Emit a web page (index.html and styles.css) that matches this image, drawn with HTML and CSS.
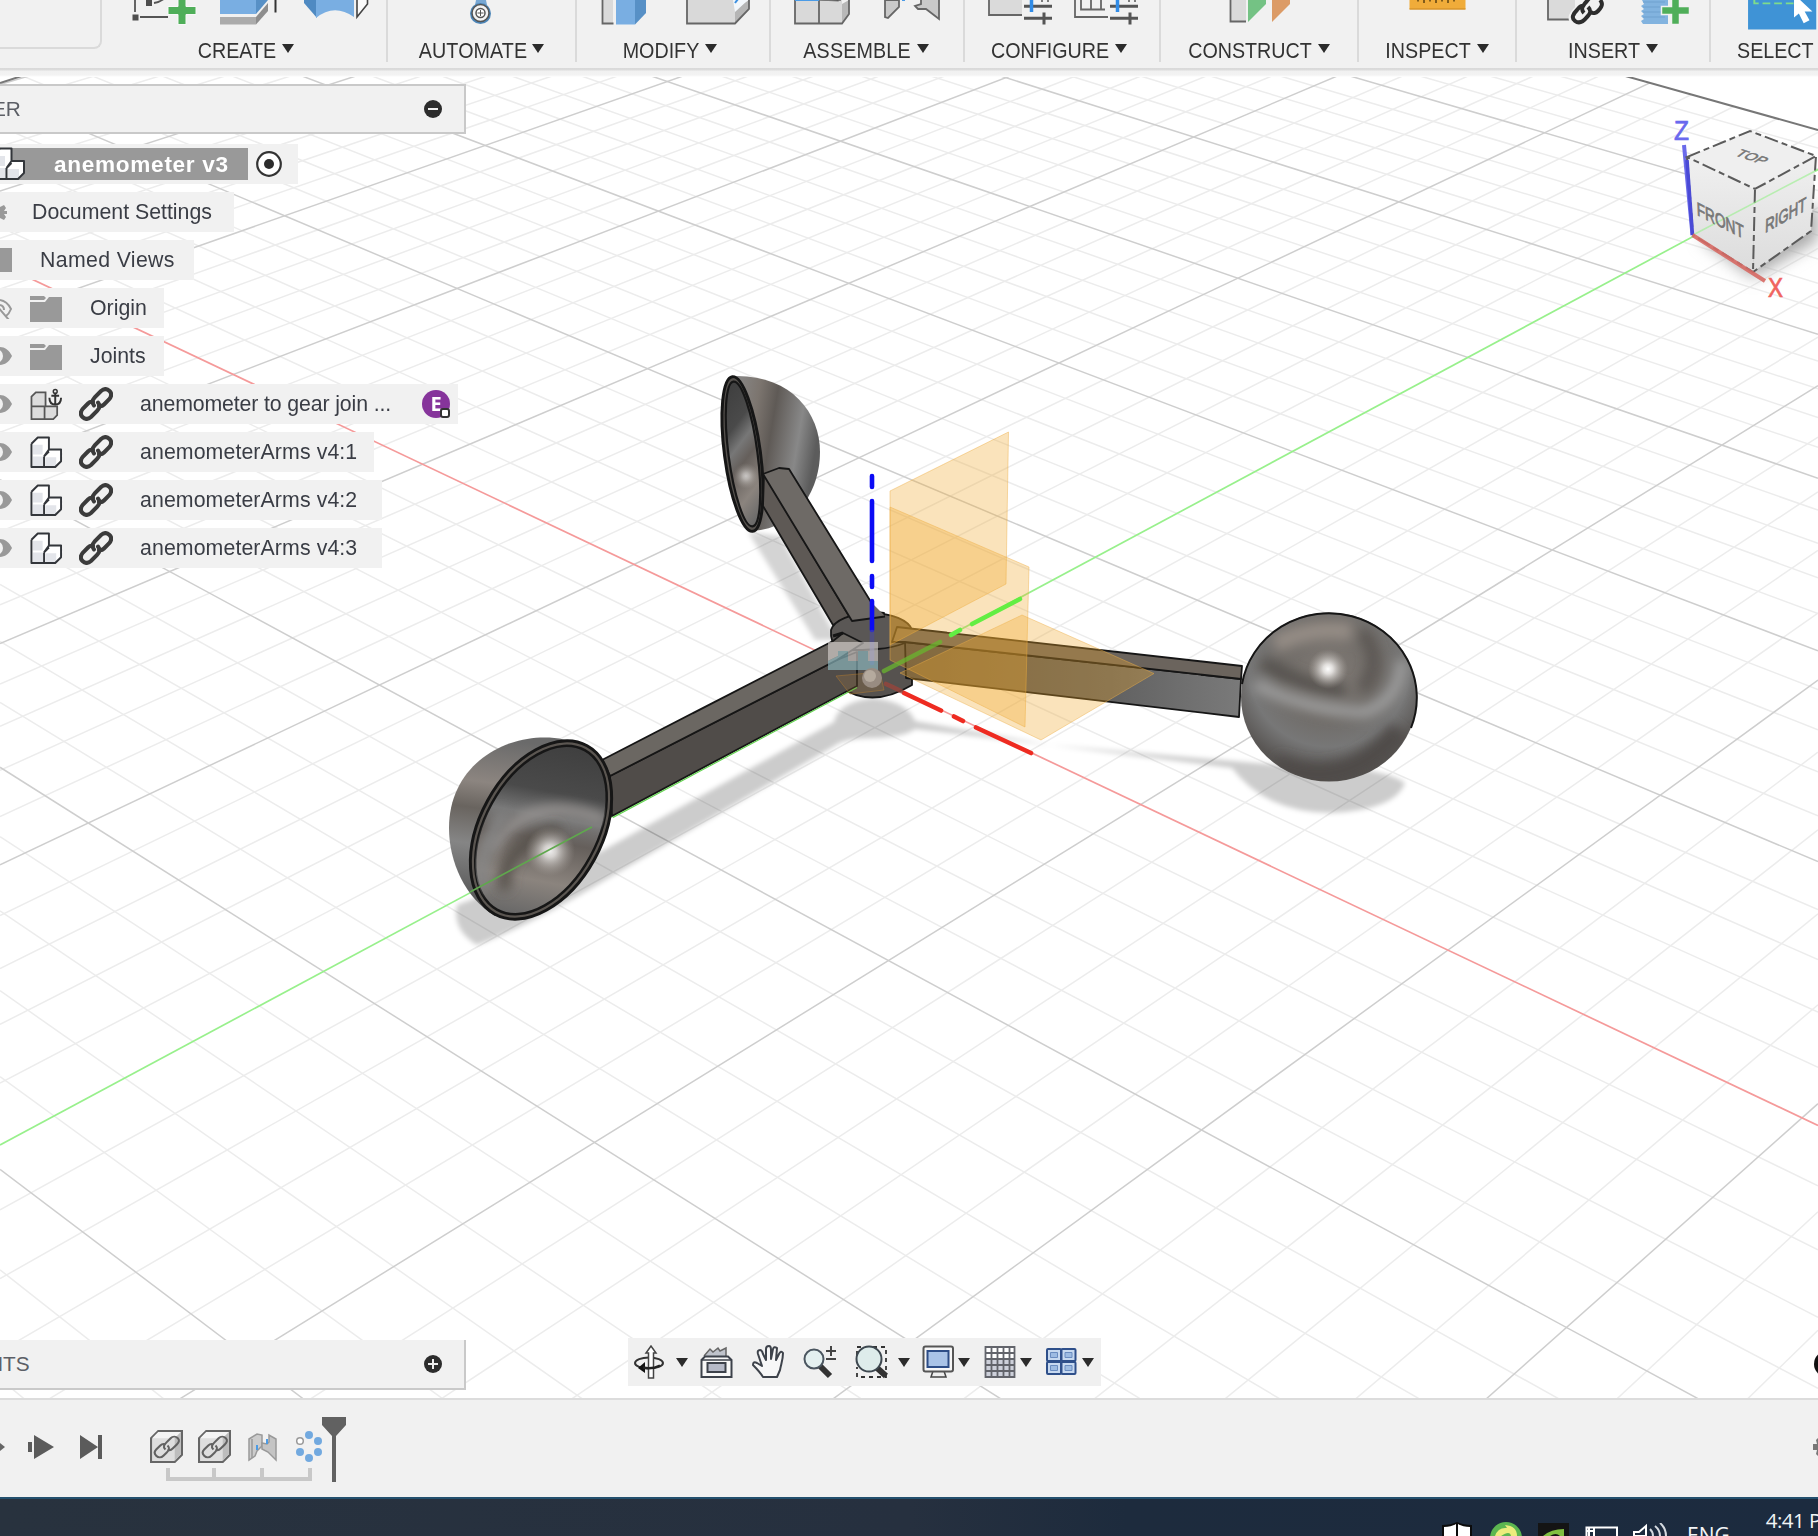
FILE: index.html
```html
<!DOCTYPE html>
<html lang="en">
<head>
<meta charset="utf-8">
<title>anemometer v3</title>
<link rel="stylesheet" href="styles.css">
</head>
<body>
<svg class="defs" width="0" height="0" aria-hidden="true">
  <defs>
    <symbol id="caret" viewBox="0 0 12 9"><path d="M0 0h12l-6 9z" fill="#2b2b2b"/></symbol>
    <symbol id="eye" viewBox="0 0 14 22"><path d="M-14 11C-6-1 6-1 12 11C6 23-6 23-14 11Z" fill="#999"/><circle cx="-4" cy="11" r="7" fill="#f1f1f1"/><circle cx="-4" cy="11" r="4" fill="#999"/></symbol>
    <symbol id="folder" viewBox="0 0 32 27"><path d="M0 1h14l2 2-2 2H0zM0 7h15l4-5h13v25H0z" fill="#999"/></symbol>
    <symbol id="comp" viewBox="0 0 34 34"><path d="M2 7 7 2h13v13h8l5 0v11l-6 6H2z" fill="#fff"/><path d="M3 21h11v10H3zM16 22h11v9H16zM3 9h10v10H3z" fill="#e3e5ea"/><path d="M1.500 8 8 1.500H19.500V14l-5 7M19.500 14H32v12l-6 6H1.500V8M14.500 21V32M14.500 21l5-5" fill="none" stroke="#33363b" stroke-width="2" stroke-linejoin="round"/></symbol>
    <symbol id="link" viewBox="0 0 34 34"><g fill="none" stroke="#3b3b3b" stroke-width="4" stroke-linecap="round"><path d="M15 18.500c-3-4-1-6 1-8.500l6-6c3-2.500 6-2.500 8.500 0s2 5.500-.5 8.500l-5 5c-2 2-3 2-5 1.500"/><path d="M19 15.500c3 4 1 6-1 8.500l-6 6c-3 2.500-6 2.500-8.500 0s-2-5.500.5-8.500l5-5c2-2 3-2 5-1.500"/></g></symbol>
    <symbol id="linkblock" viewBox="0 0 32 32"><path d="M1 8 8 1H31V24L24 31H1Z" fill="#dedede" stroke="#666" stroke-width="2"/><path d="M8 2h22l-6 6H2z" fill="#f4f4f4"/><path d="M24 8l6-6v21l-6 7z" fill="#bdbdbd"/><g fill="none" stroke="#626262" stroke-width="2"><path d="M15 19c-3-3-1-5 1-7l4-4c2-2 5-2 7 0s1 4-1 6l-4 4c-2 2-3 2-5 1"/><path d="M17 15c3 3 1 5-1 7l-3 3c-2 2-5 2-7 0s-2-4 0-6l4-4c2-2 3-2 5-1"/></g></symbol>
    <radialGradient id="ball" cx=".5" cy=".34" r=".7"><stop offset="0" stop-color="#807a75"/><stop offset=".4" stop-color="#6f6b67"/><stop offset=".65" stop-color="#777"/><stop offset=".85" stop-color="#5a5755"/><stop offset="1" stop-color="#4f4c49"/></radialGradient>
    <linearGradient id="bowl" x1=".4" y1="0" x2=".6" y2="1"><stop offset="0" stop-color="#3f3f3f"/><stop offset=".28" stop-color="#4a4a4a"/><stop offset=".42" stop-color="#777"/><stop offset=".55" stop-color="#655f5b"/><stop offset=".78" stop-color="#8b847e"/><stop offset="1" stop-color="#666"/></linearGradient>
    <linearGradient id="shell" x1="0" y1="0" x2="1" y2=".3"><stop offset="0" stop-color="#8a8a8a"/><stop offset=".3" stop-color="#7c756f"/><stop offset=".5" stop-color="#5f5a56"/><stop offset=".8" stop-color="#888"/><stop offset="1" stop-color="#5c5c5c"/></linearGradient>
    <linearGradient id="shell2" x1=".3" y1="0" x2=".2" y2="1"><stop offset="0" stop-color="#6a6a6a"/><stop offset=".25" stop-color="#8c8580"/><stop offset=".4" stop-color="#69645f"/><stop offset=".6" stop-color="#858585"/><stop offset="1" stop-color="#4b4b4b"/></linearGradient>
    <linearGradient id="arm" x1="0" x2="1"><stop offset="0" stop-color="#4f4b48"/><stop offset=".6" stop-color="#606060"/><stop offset="1" stop-color="#7a7a7a"/></linearGradient>
    <radialGradient id="glow"><stop offset="0" stop-color="#fff"/><stop offset=".25" stop-color="#f2f0ee" stop-opacity=".85"/><stop offset="1" stop-color="#aaa49e" stop-opacity="0"/></radialGradient>
    <linearGradient id="face" x1="0" y1="0" x2="0" y2="1"><stop offset="0" stop-color="#f0f0f0"/><stop offset="1" stop-color="#dcdcdc"/></linearGradient>
    <filter id="soft" x="-30%" y="-30%" width="160%" height="160%"><feGaussianBlur stdDeviation="2.500"/></filter>
    <filter id="sheen" x="-30%" y="-60%" width="160%" height="220%"><feGaussianBlur stdDeviation="6"/></filter>
    <filter id="haze" x="-50%" y="-50%" width="200%" height="200%"><feGaussianBlur stdDeviation="8"/></filter>
    <clipPath id="gridclip"><path d="M0 77H1627L1818 129.500V1398H0Z"/></clipPath>
    <clipPath id="ballclip"><ellipse cx="1329" cy="697" rx="87" ry="84"/></clipPath>
    <clipPath id="bowlclip"><ellipse cx="541" cy="830" rx="56" ry="91" transform="rotate(28.700 541 830)"/></clipPath>
  </defs>
</svg>

<header class="toolbar">
  <div class="workspace"></div>
  <section class="group create">
    <svg class="strip" viewBox="102 0 286 30" width="286" height="30">
      <path d="M135 0V12M140 17H168M154 3Q161 2 166-3" stroke="#555" stroke-width="1.800" fill="none"/><path d="M132.500 14.500h6v6h-6zM146 0h6v6h-6z" fill="#4e4e4e"/>
      <path d="M178-4h8V6.500h10v8H186V24.500h-8v-10h-10v-8h10z" fill="#4fae59" stroke="#f8f8f8" stroke-width="1"/>
      <path d="M220 0h36v14h-36z" fill="#79aee2"/><path d="M256 14V0h12z" fill="#5790c6"/><path d="M220 17h36v7.500h-36z" fill="#ababab"/><path d="M256 17 268 3v8L256 24.500z" fill="#8d8d8d"/><path d="M275.500 0V12.500" stroke="#333" stroke-width="2"/>
      <path d="M304 0h13v18L304 3z" fill="#4f8ac2"/><path d="M316 0h38v17Q334 3 316 18z" fill="#79aee2"/><path d="M357 0V17L367.500 4V0" fill="#fafafa" stroke="#444" stroke-width="1.600"/>
    </svg>
    <div class="label"><span>CREATE</span><svg class="caret"><use href="#caret"/></svg></div>
  </section>
  <section class="group automate">
    <svg class="strip" viewBox="388 0 189 30" width="189" height="30"><path d="M476 0h10l1 5h-12z" fill="#78a8d4"/><circle cx="480.500" cy="13.500" r="10.500" fill="#4d86b8"/><circle cx="480.500" cy="13" r="8.500" fill="#f3f3f3" stroke="#555" stroke-width="1.500"/><circle cx="480.500" cy="13" r="4.500" fill="#fff" stroke="#555" stroke-width="1.500"/><path d="M480.500 10v6M477.500 13h6" stroke="#555"/></svg>
    <div class="label"><span>AUTOMATE</span><svg class="caret"><use href="#caret"/></svg></div>
  </section>
  <section class="group modify">
    <svg class="strip" viewBox="577 0 194 30" width="194" height="30"><path d="M613 0V23.500H602.500V0" fill="#dadada" stroke="none"/><path d="M602.500 0V23.500H613.500" fill="none" stroke="#666" stroke-width="1.800"/><path d="M616 0h19v24.500h-19z" fill="#79aee2"/><path d="M635 0h11v13L635 24.500z" fill="#5790c6"/><path d="M687 0V23.500H735V0z" fill="#d9d9d9"/><path d="M735 23.500 749 9V0L735 9z" fill="#b5b5b5"/><path d="M733 0h15L735 12z" fill="#f3f7fb"/><path d="M687 0V23.500H735L749 9V0" fill="none" stroke="#666" stroke-width="1.800"/><path d="M735 3l3-4" stroke="#3b8fe0" stroke-width="2"/></svg>
    <div class="label"><span>MODIFY</span><svg class="caret"><use href="#caret"/></svg></div>
  </section>
  <section class="group assemble">
    <svg class="strip" viewBox="771 0 194 30" width="194" height="30"><path d="M795 0V23.500H842V0z" fill="#d9d9d9"/><path d="M842 23.500 849 14V0l-7 4z" fill="#b8b8b8"/><path d="M795 0V23.500H842L849 14V0M819 0V23.500" fill="none" stroke="#666" stroke-width="1.800"/><path d="M795 0h24" stroke="#4b9be6" stroke-width="2"/><path d="M819 0h22l-3 1z" stroke="#777"/><path d="M885 0V17l3 1L899 7V0z" fill="#c9c9c9" stroke="#666" stroke-width="1.800"/><path d="M921 0V4l-6 2 3 3 8 0 13 10V0" fill="#c9c9c9" stroke="#666" stroke-width="1.800"/><path d="M902 0h3" stroke="#4b9be6" stroke-width="2"/></svg>
    <div class="label"><span>ASSEMBLE</span><svg class="caret"><use href="#caret"/></svg></div>
  </section>
  <section class="group configure">
    <svg class="strip" viewBox="965 0 196 30" width="196" height="30"><path d="M989 0V15h33V0z" fill="#dadada"/><path d="M989 0V15H1022" fill="none" stroke="#666" stroke-width="1.800"/><path d="M1024 6.300h28M1024 18.300h28M1044 12.500v12" stroke="#555" stroke-width="3"/><path d="M1031.500 0v12" stroke="#318ce7" stroke-width="3.500"/><path d="M1042 0v2M1048 0v2" stroke="#555" stroke-width="1.500"/><path d="M1075 0V17H1108M1081 0V9.500H1105M1091 0v9M1101 0v9" fill="none" stroke="#666" stroke-width="1.800"/><path d="M1110 6.300h28M1110 18.300h28M1130 12.500v12" stroke="#555" stroke-width="3"/><path d="M1117.500 0v12" stroke="#318ce7" stroke-width="3.500"/><path d="M1129 0v2M1135 0v2" stroke="#555" stroke-width="1.500"/></svg>
    <div class="label"><span>CONFIGURE</span><svg class="caret"><use href="#caret"/></svg></div>
  </section>
  <section class="group construct">
    <svg class="strip" viewBox="1161 0 198 30" width="198" height="30"><path d="M1230.500 0V21.500H1246V0z" fill="#dadada"/><path d="M1230.500 0V21.500H1246" fill="none" stroke="#666" stroke-width="1.800"/><path d="M1248 0h18V4L1248 22z" fill="#74c284"/><path d="M1272 0h18V4l-18 18z" fill="#dc9b66"/></svg>
    <div class="label"><span>CONSTRUCT</span><svg class="caret"><use href="#caret"/></svg></div>
  </section>
  <section class="group inspect">
    <svg class="strip" viewBox="1359 0 158 30" width="158" height="30"><path d="M1409.500 0h56v9h-56z" fill="#f0ac3a"/><path d="M1409.500 9h56" stroke="#d9952a" stroke-width="1.500"/><path d="M1418 0v1.500M1424 0v3M1430 0v1.500M1436 0v3M1442 0v1.500M1448 0v3M1454 0v1.500" stroke="#5c4212" stroke-width="1.500"/></svg>
    <div class="label"><span>INSPECT</span><svg class="caret"><use href="#caret"/></svg></div>
  </section>
  <section class="group insert">
    <svg class="strip" viewBox="1517 0 194 30" width="194" height="30"><path d="M1548 0V19.500H1575V0z" fill="#dadada"/><path d="M1548 0V19.500H1572" fill="none" stroke="#666" stroke-width="1.800"/><g fill="none" stroke="#f1f1f1" stroke-width="7"><path d="M1584 12c-3-4 0-7 4-11l6-6M1588 9c3 4 1 6-2 9-4 5-8 6-12 3s-1-7 3-11"/></g><g fill="none" stroke="#2d2d2d" stroke-width="4"><path d="M1584 13c-4-4-1-8 3-12l4-5M1588 7c4 4 2 7-1 10-4 5-8 7-12 4s-2-7 2-11c2-3 5-5 8-4M1600 0c4 4 1 8-2 11-2 2-5 3-7 1"/></g><path d="M1642 0h26v24l-3 0h-22l-2-3 3-2-3-3 3-2-3-3 3-2-3-3 3-2z" fill="#82b3df"/><path d="M1643 2h22M1643 7h22M1643 12h22M1643 17h22" stroke="#6fa1cf"/><path d="M1671.500-4h8V6.500h10v8h-10V24.500h-8v-10h-10v-8h10z" fill="#4fae59" stroke="#f1f1f1" stroke-width="1.500"/></svg>
    <div class="label"><span>INSERT</span><svg class="caret"><use href="#caret"/></svg></div>
  </section>
  <section class="group select">
    <svg class="strip" viewBox="1711 0 107 31" width="107" height="31"><path d="M1747.500 0H1818V30.500h-70.500z" fill="#3f93d6"/><path d="M1754 0v3.500h41" stroke="#7edc8b" stroke-width="2" stroke-dasharray="8 4" fill="none"/><path d="M1795-6V18l5-4 5 10 6-3-5-9h8z" fill="#fff"/></svg>
    <div class="label"><span>SELECT</span></div>
  </section>
</header>

<main class="canvas">
  <svg class="scene" viewBox="0 77 1818 1321" width="1818" height="1321">
    <g clip-path="url(#gridclip)"><g id="minor"></g><g id="major"></g></g>
    <path d="M1620 74.500 1818 130" stroke="#777" stroke-width="2"/>
    <path d="M0 83 28 74" stroke="#777" stroke-width="2"/>
    <path d="M0 264 1818 1125.500" stroke="#f59a9a" stroke-width="1.700"/>
    <path d="M0 1145 1818 169.500" stroke="#98f08c" stroke-width="1.700"/>

    <!-- ground shadows -->
    <g fill="#000" fill-opacity=".2" filter="url(#soft)">
      <path d="M748 532 780 536 838 640 815 640Z" opacity=".85"/>
      <path d="M457 905Q452 930 477 945Q530 925 595 886L836 745Q845 738 873 738Q905 737 915 729L1050 745 1232 768Q1265 812 1330 813Q1395 810 1405 783Q1380 765 1290 766L1050 745 915 721Q908 702 873 698Q838 702 834 722L600 852Z"/>
    </g>

    <g stroke="#161616" stroke-width="1.800" stroke-linejoin="round">
      <!-- rear cup -->
      <path d="M733 376C790 374 820 412 820 452C820 487 800 528 752 531Z" fill="url(#shell)" stroke="none"/>
      <ellipse cx="742.500" cy="454" rx="18" ry="78" transform="rotate(-7.500 742.500 454)" fill="#56524e" stroke-width="3"/>
      <ellipse cx="743" cy="454" rx="14.500" ry="73" transform="rotate(-7.500 743 454)" fill="url(#bowl)" stroke-width="2.200"/>
      <circle cx="746" cy="476" r="13" fill="url(#glow)" stroke="none" opacity=".6"/>
      <path d="M764 474 852 621 833 625 763 506Z" fill="#5e5955"/>
      <!-- hub -->
      <path d="M840 650V687Q872 709 912 685V630Z" fill="#56524f"/>
      <path d="M831 630A41 20 0 0 1 912 630Q912 640 905 643Q892 648 878 649L863 650H838Q830 642 831 630Z" fill="#5a5755"/>
      <path d="M876 612 884 613 884 617" fill="#222"/>
      <path d="M763 474 779 468 789 469 871 602 885 616 852 621Z" fill="#6e6a66" stroke="none"/>
      <path d="M885 616.500 852 621 763 474 779 468 789 469 871 602" fill="none"/>
      <!-- right arm -->
      <path d="M905 642 1241 679 1239 717 906 678Z" fill="url(#arm)"/>
      <path d="M897 627 1242 666 1241 679 905 642 892 642Z" fill="#6b645d"/>
      <!-- left arm -->
      <path d="M610 776 837 660 857 652 857 686 612 816Z" fill="#504c49"/>
      <path d="M602 760 833 641 843 633 863 643 837 660 610 776Z" fill="#6b6762"/>
      <path d="M833 636 843 633" fill="none" stroke-width="3"/>
      <!-- front cup -->
      <path d="M582 745C530 722 449 752 449 828C449 862 465 898 495 916L560 840Z" fill="url(#shell2)" stroke="none"/>
      <ellipse cx="541" cy="830" rx="61" ry="96" transform="rotate(28.700 541 830)" fill="#5b5651" stroke-width="3"/>
      <ellipse cx="541" cy="830" rx="56" ry="91" transform="rotate(28.700 541 830)" fill="url(#bowl)" stroke-width="2.500"/>
    </g>
    <g clip-path="url(#bowlclip)">
      <path d="M490 850Q530 790 605 820" stroke="#969391" stroke-width="11" fill="none" filter="url(#sheen)"/>
      <path d="M505 890Q500 845 560 830" stroke="#57514c" stroke-width="12" fill="none" filter="url(#sheen)"/>
      <path d="M482 890Q478 850 505 812" stroke="#858585" stroke-width="12" fill="none" filter="url(#sheen)"/>
      <circle cx="550" cy="851" r="25" fill="url(#glow)" opacity=".9"/>
    </g>
    <path d="M470 892 592 827" stroke="#5fa84d" stroke-width="1.600"/>
    <path d="M613 817.500 857 687.500" stroke="#61d24d" stroke-width="1.200"/>

    <!-- right ball -->
    <ellipse cx="1329" cy="697" rx="88" ry="84.500" fill="url(#ball)" stroke="none"/>
    <g clip-path="url(#ballclip)"><g fill="none" filter="url(#sheen)">
      <path d="M1275 645Q1310 625 1352 632" stroke="#948c85" stroke-width="18"/>
      <path d="M1262 662Q1310 690 1345 690" stroke="#57534f" stroke-width="14"/>
      <path d="M1255 684Q1310 712 1365 712Q1400 700 1402 660" stroke="#9c9c9c" stroke-width="12"/>
      <path d="M1362 632Q1385 660 1362 690" stroke="#5c5753" stroke-width="12"/>
      <path d="M1275 765Q1345 795 1400 730" stroke="#504c48" stroke-width="22"/>
    </g></g>
    <circle cx="1328" cy="669" r="20" fill="url(#glow)"/>
    <path d="M1242 684A88 84.500 0 1 1 1411 728" fill="none" stroke="#151515" stroke-width="2"/>

    <!-- origin planes -->
    <g fill="#f0a72c" fill-opacity=".32" stroke="#eeb04a" stroke-opacity=".45">
      <path d="M890 491 1008.500 432 1006 584 890 645Z"/>
      <path d="M890 507 1029 567 1025 727 890 660Z"/>
      <path d="M1022 615 1154 673.500 1041 740 900 673Z"/>
    </g>
    <g stroke-linecap="round" stroke-width="4.600">
      <path d="M872 476V487M872 501V561M872 576V587M872 601V630" stroke="#0b0bf5"/>
      <path d="M872 632V663" stroke="#4c4c9c" opacity=".6"/>
      <path d="M1020 599 972 624M960 630 951 635" stroke="#62ee43"/>
      <path d="M940 642 884 671" stroke="#69b52e" opacity=".75"/>
      <path d="M904 693 941 710.500M954 716.500 963 721M976 727.500 1031 753" stroke="#ee2b21"/>
      <path d="M886 684 901 691" stroke="#98453c" opacity=".8"/>
    </g>
    <path d="M836 676 880 672 884 690 850 694Z" fill="#b08040" fill-opacity=".22" stroke="#b07a30" stroke-opacity=".5"/>
    <path d="M828 642H878V661H868V651H858V661H848V651H838V656L828 661Z" fill="#ddd8d6" opacity=".6"/>
    <path d="M828 661 838 656V651H848V661H858V651H868V661H878V670H828Z" fill="#93c1c9" opacity=".62"/>
    <circle cx="872" cy="678" r="10" fill="#988c82"/><circle cx="870" cy="676" r="6" fill="#b5aa9e"/>

    <!-- view cube -->
    <path d="M1700 238 1753 278 1818 240V205Z" fill="#aaa" filter="url(#haze)"/>
    <path d="M1684 145 1692.500 235" stroke="#6a6aea" stroke-width="4"/>
    <path d="M1687 157 1750 131 1816 156 1755 189Z" fill="#efefef"/>
    <path d="M1687 157 1755 189 1753 272 1693 235Z" fill="url(#face)"/>
    <path d="M1755 189 1816 156 1811 231 1753 272Z" fill="url(#face)"/>
    <path d="M1687 157 1750 131 1816 156 1755 189ZL1693 235 1753 272 1811 231 1816 156M1755 189 1753 272" fill="none" stroke="#5b5b5b" stroke-width="2" stroke-dasharray="14 4 6 4"/>
    <path d="M1692 235.500 1818 169.500" stroke="#98f08c" stroke-width="1.600" opacity=".6"/>
    <path d="M1687 160 1692.500 235" stroke="#4a4ad6" stroke-width="3.500"/>
    <path d="M1692.500 235 1765 281" stroke="#d76a64" stroke-width="4" opacity=".9"/>
    <g class="cube-text">
      <text transform="matrix(.84 .43 .04 1 1697 215)" textLength="56" lengthAdjust="spacingAndGlyphs">FRONT</text>
      <text transform="matrix(.82 -.46 -.03 1 1765 233)" textLength="50" lengthAdjust="spacingAndGlyphs">RIGHT</text>
      <text transform="matrix(.88 .3 -.6 .45 1734 155)" textLength="32" lengthAdjust="spacingAndGlyphs">TOP</text>
    </g>
    <text class="axis" x="1674" y="140" fill="#6969ee" stroke="#6969ee" textLength="15" lengthAdjust="spacingAndGlyphs">Z</text>
    <text class="axis" x="1768" y="297" fill="#f0645e" stroke="#f0645e" textLength="15" lengthAdjust="spacingAndGlyphs">X</text>
    <circle cx="1827" cy="1364" r="13" fill="#111"/>
  </svg>

  <aside class="browser">
    <div class="panel-head"><span>ER</span><svg class="knob" width="18" height="18"><circle cx="9" cy="9" r="9" fill="#2c2c2c"/><path d="M4 9h10" stroke="#eee" stroke-width="2"/></svg></div>
    <ul class="tree">
      <li class="root"><div class="active"><svg class="cropcomp" viewBox="8 0 26 34" width="26" height="34"><use href="#comp" width="34" height="34"/></svg><b>anemometer v3</b></div><svg width="26" height="26"><circle cx="13" cy="13" r="11.800" fill="#fff" stroke="#333" stroke-width="2.200"/><circle cx="13" cy="13" r="5" fill="#2c2c2c"/></svg></li>
      <li class="docs"><svg class="lead" width="7" height="24"><path d="M-5 3h5v4l4-2 2 3-2 3h3v3H4l2 3-2 3-4-2v5h-5z" fill="#999"/></svg><span>Document Settings</span></li>
      <li class="views"><i class="block"></i><span>Named Views</span></li>
      <li class="origin"><svg class="eye" width="14" height="24"><path d="M0 3q7 1 11 9-2 5-5 7M0 8q4 1 4 5M-3 9 9 23" fill="none" stroke="#999" stroke-width="2"/></svg><svg class="fold"><use href="#folder"/></svg><span>Origin</span></li>
      <li class="joints"><svg class="eye"><use href="#eye"/></svg><svg class="fold"><use href="#folder"/></svg><span>Joints</span></li>
      <li class="gear"><svg class="eye"><use href="#eye"/></svg><svg class="comp" viewBox="0 0 34 34"><path d="M2 8 6 4H17V18H28V28L24 32H2Z" fill="#dcdcdc"/><path d="M1.500 9 6 4.500H16V19H28V28L24 32H1.500ZM1.500 19H16M15 19V32" fill="none" stroke="#555" stroke-width="1.800"/><path d="M26 5V17M20 10q0 7 6 7t6-7M22 8h8" fill="none" stroke="#333" stroke-width="2"/><circle cx="26" cy="3.500" r="2" fill="none" stroke="#333" stroke-width="1.500"/></svg><svg class="link"><use href="#link"/></svg><span>anemometer to gear join ...</span><em class="badge">E<i></i></em></li>
      <li class="arm1"><svg class="eye"><use href="#eye"/></svg><svg class="comp"><use href="#comp"/></svg><svg class="link"><use href="#link"/></svg><span>anemometerArms v4:1</span></li>
      <li class="arm2"><svg class="eye"><use href="#eye"/></svg><svg class="comp"><use href="#comp"/></svg><svg class="link"><use href="#link"/></svg><span>anemometerArms v4:2</span></li>
      <li class="arm2"><svg class="eye"><use href="#eye"/></svg><svg class="comp"><use href="#comp"/></svg><svg class="link"><use href="#link"/></svg><span>anemometerArms v4:3</span></li>
    </ul>
  </aside>

  <div class="bottom-row">
    <div class="panel-head comments"><span>NTS</span><svg class="knob" width="18" height="18"><circle cx="9" cy="9" r="9" fill="#2c2c2c"/><path d="M4 9h10M9 4v10" stroke="#eee" stroke-width="2"/></svg></div>
    <nav class="viewbar">
      <svg width="32" height="34"><ellipse cx="15" cy="18" rx="14" ry="5.500" fill="none" stroke="#333" stroke-width="2"/><path d="M14.500 33V8H12L17 1l5 7h-2.500V33Z" fill="#fff" stroke="#444" stroke-width="1.500"/><path d="M4 23 11 17v11z" fill="#111"/><path d="M9 22.500q9 2 17-2" fill="none" stroke="#222" stroke-width="2.500"/></svg>
      <svg class="caret"><use href="#caret"/></svg>
      <svg width="34" height="34"><path d="M4 11 10 4l3 3 5-4 2 3 6-3v8" fill="#bfc3cb" stroke="#666" stroke-width="1.500"/><path d="M1.500 15 5 11.500H28L31.500 15V32H1.500Z" fill="#f8f8f8" stroke="#3d424b" stroke-width="2"/><path d="M2 15h29" stroke="#3d424b" stroke-width="1.500"/><path d="M7.500 18h18v9h-18z" fill="#b6bac8" stroke="#3d424b" stroke-width="2"/></svg>
      <svg width="34" height="34"><path d="M11 32C8 27 5 24 1 20Q1 16 5 18L10 21 6 9Q5 5 8 5 10 5 11 9L14 15 14 4Q14 1 17 1 19 1 19 5V14L21 4Q22 1 25 3L24 15 27 9Q29 5 31 8C31 15 29 19 28 25L25 32Z" fill="#f7f7f7" stroke="#3e434b" stroke-width="2" stroke-linejoin="round"/></svg>
      <svg width="34" height="34"><path d="M17 21 27 31" stroke="#333" stroke-width="6"/><circle cx="11" cy="14" r="9.500" fill="#e4f0f0" stroke="#4b5660" stroke-width="2"/><path d="M23 6h10M28 1v10M23 14h10" stroke="#444" stroke-width="2"/></svg>
      <svg width="34" height="34"><path d="M2 10V2H31V32H2V22" fill="none" stroke="#333" stroke-width="1.800" stroke-dasharray="4 4"/><path d="M21 22 31 31" stroke="#333" stroke-width="6"/><circle cx="14" cy="14" r="12.500" fill="#deeceb" stroke="#3e4850" stroke-width="2"/></svg>
      <svg class="caret"><use href="#caret"/></svg>
      <svg width="34" height="34"><path d="M11 26h11l2 6H9z" fill="#eee" stroke="#444" stroke-width="1.500"/><rect x="1.500" y="1.500" width="29.500" height="25" rx="2" fill="#f7f7f7" stroke="#555" stroke-width="2"/><rect x="5.500" y="6" width="21" height="16" fill="#a9c3e7" stroke="#2d4d87" stroke-width="2"/></svg>
      <svg class="caret"><use href="#caret"/></svg>
      <svg width="34" height="34"><path d="M1 1h30v31H1z" fill="#fff"/><path d="M1 14h30v18H1z" fill="#cdd0da"/><path d="M1.500 2H30.500V32H1.500ZM7.500 2V32M13.500 2V32M19.500 2V32M25.500 2V32M2 8H31M2 14H31M2 20H31M2 26H31" fill="none" stroke="#62646b" stroke-width="1.800"/></svg>
      <svg class="caret"><use href="#caret"/></svg>
      <svg width="32" height="34"><g fill="#c7d9f0" stroke="#2e4f8a" stroke-width="2"><rect x="1" y="4" width="14" height="12" rx="1"/><rect x="15.500" y="4" width="14" height="12" rx="1"/><rect x="1" y="17" width="14" height="12" rx="1"/><rect x="15.500" y="17" width="14" height="12" rx="1"/></g><g fill="#9dbbe2" stroke="#6a8cc0"><path d="M4.500 7.500h7v5h-7zM19 7.500h7v5h-7zM4.500 20.500h7v5h-7zM19 20.500h7v5h-7z"/></g></svg>
      <svg class="caret"><use href="#caret"/></svg>
    </nav>
  </div>
</main>

<section class="timeline">
  <svg width="5" height="14"><path d="M0 3 5 7 0 11z" fill="#666"/></svg>
  <svg class="step" width="26" height="24"><path d="M0 7h4v10H0zM6 0 26 12 6 24z" fill="#5b5b5b"/></svg>
  <svg class="end" width="23" height="24"><path d="M0 0 18 12 0 24zM18 0h4v24h-4z" fill="#5b5b5b"/></svg>
  <svg class="feat1" width="33" height="33"><use href="#linkblock"/></svg>
  <svg class="feat2" width="33" height="33"><use href="#linkblock"/></svg>
  <svg class="feat3" width="30" height="30"><path d="M1 7 9 2 14 3 14 14 9 19 7 24 1 28Z" fill="#ccc" stroke="#999" stroke-width="1.500"/><path d="M4 7V26M14 11l5 1 2-2V3l7 4V28L20 20 14 17Z" fill="#c4c4c4" stroke="#999" stroke-width="1.500"/><path d="M9 13v5M19 7v5" stroke="#4b9be6" stroke-width="2"/></svg>
  <svg class="feat4" width="28" height="32"><g fill="#72a9df"><circle cx="13" cy="4" r="4"/><circle cx="22" cy="10" r="4"/><circle cx="22" cy="21" r="4"/><circle cx="13" cy="27" r="4"/><circle cx="4" cy="21" r="4"/></g><circle cx="4" cy="10" r="3.300" fill="#fff" stroke="#999" stroke-width="1.500"/></svg>
  <svg class="marker" width="180" height="66"><path d="M2 51V62H144V51M48 51V62M96 51V62" fill="none" stroke="#c8c8c8" stroke-width="4"/><path d="M156 0h24v8l-10 11v46h-4V19L156 8z" fill="#616161"/></svg>
  <svg class="cog" width="5" height="24"><path d="M5 3 3 5l1 4H0v6h4l-1 4 2 2z" fill="#777"/></svg>
</section>

<footer class="taskbar">
  <svg width="30" height="14"><path d="M0 3Q9 3 15 0Q21 3 30 3V14H0Z" fill="#0b0b0b"/><path d="M2 5Q9 5 14 2V14H2ZM16 2Q21 5 28 5V14H16Z" fill="#fff"/></svg>
  <svg class="t2" width="32" height="14"><circle cx="16" cy="16" r="16" fill="#5cb650"/><path d="M5 14Q8 5 17 6L15 3Q27 4 27 14H21Q20 8 11 14Z" fill="#ecec7c"/></svg>
  <svg class="t3" width="31" height="13"><path d="M0 0h31v13H0z" fill="#141414"/><path d="M5 13Q13 6 26 6V13H22Q18 9 12 13Z" fill="#80bf40"/></svg>
  <svg class="t4" width="34" height="10"><path d="M1.500 10V1.500H32V10M9 1v9M1 5h8" fill="none" stroke="#fff" stroke-width="2"/><path d="M3 1h2v9H3z" fill="#fff"/></svg>
  <svg class="t5" width="34" height="13"><path d="M1 13V9H6L13 3V13Z" fill="none" stroke="#fff" stroke-width="2"/><path d="M17 6q3 3 3 7M22 3q5 4 5 10M27 0q6 5 6 13" fill="none" stroke="#d5dae0" stroke-width="2"/></svg>
  <span class="lang">ENG</span>
  <span class="time">4:41 P</span>
</footer>
<script src="grid.js"></script>
</body>
</html>
```
FILE: styles.css
```css
* { box-sizing: border-box; }
html, body { margin: 0; }
body {
  width: 1818px;
  height: 1536px;
  overflow: hidden;
  display: flex;
  flex-direction: column;
  background: #f1f1f1;
  color: #3a3d45;
  font: 21.3px/1 "Liberation Sans", Arial, sans-serif;
}
svg { display: block; flex: none; }
.defs { position: absolute; }
.caret { width: 12px; height: 9px; }

/* toolbar */
.toolbar {
  display: flex;
  flex: none;
  height: 77px;
  background: linear-gradient(#f1f1f1 68px, #d9d9d9 68px, #dcdcdc 70px, #f1f1f1 71px, #f3f3f3 75px, #fff 77px);
}
.workspace {
  width: 102px;
  height: 49px;
  border: solid #dadada;
  border-width: 0 2px 2px 0;
  border-radius: 0 0 8px 0;
}
.group {
  display: flex;
  flex-direction: column;
  align-items: center;
  height: 62px;
  border-right: 2px solid #dadada;
  flex: none;
  overflow: hidden;
}
.strip { height: 30px; margin-bottom: 10px; align-self: flex-start; }
.label { display: flex; align-items: center; gap: 6px; height: 22px; }
.label span { font-size: 19.7px; color: #333; transform: scaleY(1.1); }
.label .caret { margin-top: -5px; }
.create { width: 286px; }
.create .label { padding-left: 4px; }
.automate { width: 189px; }
.automate .label { gap: 5px; letter-spacing: .1px; }
.modify { width: 194px; }
.modify .label { padding-right: 6px; }
.assemble { width: 194px; }
.assemble .label { padding-right: 2px; letter-spacing: .15px; }
.configure { width: 196px; }
.configure .label { padding-right: 6px; }
.construct { width: 198px; }
.inspect { width: 158px; }
.insert { width: 194px; }
.select { width: 107px; border: 0; }
.select .label { align-self: flex-start; padding-left: 26px; }

/* canvas */
.canvas {
  position: relative;
  flex: none;
  height: 1321px;
  display: flex;
  flex-direction: column;
  justify-content: space-between;
  background: #fff;
  overflow: hidden;
}
.scene { position: absolute; inset: 0; }
.cube-text { font: 19px "Liberation Sans", sans-serif; fill: #777; stroke: #777; stroke-width: .8px; }
.axis { font: 27px "Liberation Sans", sans-serif; stroke-width: .7px; }
.browser { position: relative; padding-top: 7px; }
.panel-head {
  display: flex;
  align-items: center;
  justify-content: space-between;
  width: 466px;
  height: 50px;
  padding-right: 22px;
  background: #f1f1f1;
  border: solid #c9c9c9;
  border-width: 2px 2px 2px 0;
  color: #5c5f66;
}
.panel-head span { margin-left: -8px; font-size: 20.8px; }
.tree { list-style: none; margin: 10px 0 0; padding: 0; display: flex; flex-direction: column; gap: 8px; }
.tree li { display: flex; align-items: center; height: 40px; background: #f1f1f1; white-space: nowrap; }
.tree span, .tree b { padding-top: 2px; }
.root { width: 298px; gap: 8px; }
.docs { width: 234px; }
.views { width: 194px; }
.views span { letter-spacing: .35px; }
.origin, .joints { width: 164px; }
.gear { width: 458px; }
.gear span { letter-spacing: -.13px; }
.arm1 { width: 374px; }
.arm2 { width: 382px; }
.arm1 span, .arm2 span { letter-spacing: .1px; }
.active { display: flex; align-items: center; width: 248px; height: 32px; background: #999; color: #fff; }
.active b { margin-left: 28px; font-size: 22.6px; letter-spacing: .7px; }
.docs .lead { margin-right: 25px; }
.block { width: 12px; height: 24px; margin-right: 28px; background: #999; }
.eye { width: 14px; height: 22px; margin-right: 16px; }
.fold { width: 32px; height: 27px; margin-right: 28px; }
.comp { width: 33px; height: 33px; margin-right: 16px; }
.link { width: 34px; height: 34px; margin-right: 27px; }
.badge {
  position: relative;
  width: 28px;
  height: 28px;
  margin-left: auto;
  margin-right: 8px;
  border-radius: 50%;
  background: #86349b;
  color: #fff;
  font: bold 20px/28px "Open Sans", sans-serif;
  text-align: center;
}
.badge i { position: absolute; right: 0; bottom: 0; width: 10px; height: 10px; border: 2px solid #333; border-radius: 3px; background: #fff; }
.bottom-row { position: relative; display: flex; align-items: flex-start; height: 60px; }
.comments { margin-top: 2px; border-top: 0; }
.comments span { margin-left: -12px; }
.viewbar {
  display: grid;
  grid-template-columns: 42px 24px 52px 51px 52px 43px 24px 36px 26px 36px 26px 36px 12px;
  align-items: center;
  width: 473px;
  height: 48px;
  margin-left: 162px;
  padding-left: 6px;
  background: #f0f0f0;
}

/* timeline */
.timeline {
  position: relative;
  flex: none;
  display: flex;
  align-items: center;
  height: 99px;
  border-top: 2px solid #dcdcdc;
  background: #f1f1f1;
}
.timeline > svg { margin-top: -4px; }
.timeline > .marker { position: absolute; left: 166px; top: 17px; margin: 0; }
.step { margin-left: 23px; }
.end { margin-left: 26px; }
.feat1 { margin-left: 47px; }
.feat2 { margin-left: 15px; }
.feat3 { margin-left: 17px; }
.feat4 { margin-left: 18px; }
.cog { margin-left: auto; }

/* taskbar */
.taskbar {
  flex: 1;
  display: flex;
  align-items: flex-end;
  padding-left: 1442px;
  overflow: hidden;
  border-top: 2px solid #24506e;
  background: linear-gradient(90deg, #28323e, #26303f 50%, #1d2b3d 62%, #1c2b3f);
  color: #f2f4f6;
  font-family: "Open Sans", sans-serif;
}
.t2 { margin-left: 18px; }
.t3 { margin-left: 16px; }
.t4 { margin-left: 16px; }
.t5 { margin-left: 14px; }
.lang { height: 10px; margin-left: 20px; font-size: 21px; line-height: 18px; }
.time { height: 29px; margin-left: 36px; font-size: 20.5px; line-height: 27px; white-space: nowrap; letter-spacing: -.5px; }
```
FILE: grid.js
```js
// Perspective ground grid: every line of a family runs through one vanishing point.
const NS = "http://www.w3.org/2000/svg";
const families = [
  { x: -3198, y: -1251, slope: 0.4737, step: 0.1247, from: -29 },
  { x: 4464, y: -1251, slope: -0.5367, step: 0.1323, from: -30 }
];
for (const f of families) {
  for (let i = f.from; i <= 20; i++) {
    if (i === 0) continue;
    const m = f.slope / (1 - f.step * i / 5);
    const line = document.createElementNS(NS, "line");
    line.setAttribute("x1", 0);
    line.setAttribute("y1", f.y - m * f.x);
    line.setAttribute("x2", 1818);
    line.setAttribute("y2", f.y + m * (1818 - f.x));
    document.getElementById(i % 5 === 0 ? "major" : "minor").appendChild(line);
  }
}
document.getElementById("minor").setAttribute("stroke", "#ececec");
document.getElementById("minor").setAttribute("stroke-width", "1.5");
document.getElementById("major").setAttribute("stroke", "#cecece");
document.getElementById("major").setAttribute("stroke-width", "1.5");
```
